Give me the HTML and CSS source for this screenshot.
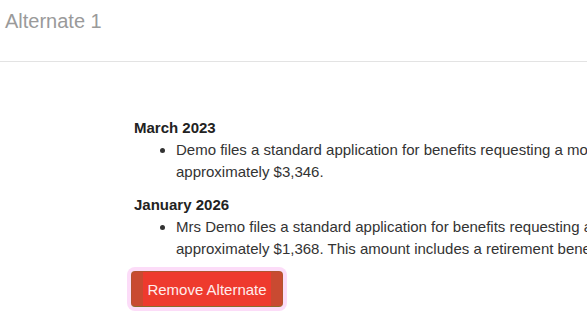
FILE: index.html
```html
<!DOCTYPE html>
<html lang="en">
<head>
<meta charset="utf-8">
<title>Alternate 1</title>
<link rel="stylesheet" href="styles.css">
</head>
<body>
<header class="page-header">
  <h1 class="page-title">Alternate 1</h1>
</header>
<main class="content">
  <div class="timeline">
    <h2 class="event-date">March 2023</h2>
    <ul class="event-list">
      <li>Demo files a standard application for benefits requesting a monthly benefit of approximately $3,346.</li>
    </ul>
    <h2 class="event-date">January 2026</h2>
    <ul class="event-list">
      <li>Mrs Demo files a standard application for benefits requesting a spousal benefit of approximately $1,368. This amount includes a retirement benefit.</li>
    </ul>
  </div>
  <button class="btn-remove" type="button">Remove Alternate</button>
</main>
</body>
</html>
```

FILE: styles.css
```css
html, body {
  margin: 0;
  padding: 0;
  overflow: hidden;
  background: #ffffff;
}

body {
  font-family: "Liberation Sans", Arial, sans-serif;
  color: #222222;
  width: 587px;
  height: 323px;
}

.page-header {
  height: 62px;
  box-sizing: border-box;
  padding: 10px 5px 0;
  border-bottom: 1px solid #e3e3e3;
}

.page-title {
  margin: 0;
  font-size: 20px;
  font-weight: normal;
  line-height: 23px;
  color: #9a9a9a;
}

.content {
  padding: 55px 0 0 134px;
}

.timeline {
  width: 600px;
}

.event-date {
  margin: 0;
  font-size: 15px;
  font-weight: bold;
  line-height: 22px;
  color: #222222;
}

.event-list {
  margin: 0 0 11px;
  padding-left: 42px;
  font-size: 15px;
  line-height: 22px;
  color: #333333;
}

.btn-remove {
  display: block;
  box-sizing: border-box;
  width: 152px;
  height: 36px;
  margin-left: -3px;
  padding: 0;
  font-family: "Liberation Sans", Arial, sans-serif;
  font-size: 15px;
  color: #ffecec;
  border: 1px solid #b0552f;
  border-bottom-color: #8a6b2c;
  border-radius: 4px;
  background: linear-gradient(to right, #c94a31 0, #c94a31 11px, #ee3a2e 11px, #ee3a2e calc(100% - 11px), #c94a31 calc(100% - 11px));
  box-shadow: 0 0 0 4px #fcdcf8;
  cursor: pointer;
}
```
